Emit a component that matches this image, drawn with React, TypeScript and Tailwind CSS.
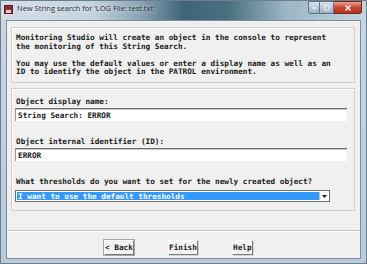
import { Minus, Square, X } from "lucide-react"

const MONO = "font-['DejaVu_Sans_Mono',monospace] font-bold text-[7.7px] leading-[9px] text-[#1a1a1a]"

const INTRO = [
  "Monitoring Studio will create an object in the console to represent",
  "the monitoring of this String Search.",
  "",
  "You may use the default values or enter a display name as well as an",
  "ID to identify the object in the PATROL environment.",
]

function TextField({ value }: { value: string }) {
  return (
    <div className="h-[13px] mr-[7px] bg-white border-t border-l border-t-[#6d6d6d] border-l-[#9a9a9a] shadow-[inset_0_1px_0_#c8c8c8] flex items-center pl-[2px]">
      <span className={MONO}>{value}</span>
    </div>
  )
}

function WinButton({ label, strong }: { label: string; strong?: boolean }) {
  return (
    <button
      className={`h-[15px] bg-[#f4f4f4] border border-t-white border-l-white border-r-[#7a7a7a] border-b-[#7a7a7a] shadow-[1px_1px_0_#d4d4d4] flex items-center justify-center ${MONO} ${
        strong ? "outline outline-1 outline-[#a8a8a8]" : ""
      }`}
    >
      {label}
    </button>
  )
}

export default function App() {
  return (
    <div className="w-[367px] h-[264px] overflow-hidden flex flex-col bg-gradient-to-b from-[#c9d7e3] to-[#b9cad8] border border-[#6c7f8e] font-['Open_Sans',sans-serif]">
      {/* Title bar */}
      <div className="h-[19px] shrink-0 flex items-start bg-[linear-gradient(90deg,#d3dde6_0%,#c7d4de_25%,#8aa4b4_38%,#3f6678_50%,#47707f_62%,#9cb6c6_78%,#c4d5df_100%)]">
        <div className="mt-[4px] ml-[3px] w-[9px] h-[9px] bg-[#8a2f36] border border-[#5b1c22] flex items-end justify-center">
          <div className="w-[5px] h-[3px] bg-[#e8c8c8]" />
        </div>
        <span className="ml-[4px] mt-[2px] text-[7.5px] leading-[11px] text-[#1f2d38] [text-shadow:0_0_4px_#ffffff]">
          New String search for 'LOG File: test.txt'
        </span>
        <div className="ml-auto mr-[4px] flex">
          <div className="w-[12px] h-[13px] rounded-bl-[3px] border border-[#5e7484] bg-gradient-to-b from-[#d7e2ea] to-[#9fb3c2] flex items-center justify-center">
            <Minus className="w-[6px] h-[6px] text-white" strokeWidth={4} />
          </div>
          <div className="w-[14px] h-[13px] border-y border-r border-[#5e7484] bg-gradient-to-b from-[#d7e2ea] to-[#9fb3c2] flex items-center justify-center">
            <Square className="w-[6px] h-[6px] text-white" strokeWidth={3} />
          </div>
          <div className="w-[28px] h-[13px] rounded-br-[3px] border-y border-r border-[#6a2a22] bg-gradient-to-b from-[#e8a08c] via-[#c8452f] to-[#b8321e] flex items-center justify-center">
            <X className="w-[8px] h-[8px] text-white" strokeWidth={4} />
          </div>
        </div>
      </div>

      {/* Client area */}
      <div className="flex-1 mx-[5px] mb-[4px] border border-[#7d8c98] bg-[#f0f0f0] flex flex-col">
        {/* Intro panel */}
        <div className="mt-[6px] ml-[4px] mr-[5px] h-[56px] border border-[#cfcfcf] shadow-[inset_1px_1px_0_#ffffff] pt-[5px] pl-[4px]">
          {INTRO.map((line, i) => (
            <div key={i} className={`${MONO} whitespace-pre h-[8.5px]`}>
              {line}
            </div>
          ))}
        </div>

        {/* Object panel */}
        <div className="mt-[5px] ml-[4px] mr-[5px] h-[123px] border border-[#cfcfcf] shadow-[inset_1px_1px_0_#ffffff] pl-[3px] flex flex-col">
          <div className={`${MONO} mt-[8px] pl-[1px]`}>Object display name:</div>
          <div className="mt-[2px]">
            <TextField value="String Search: ERROR" />
          </div>
          <div className={`${MONO} mt-[16px] pl-[1px]`}>Object internal identifier (ID):</div>
          <div className="mt-[2px]">
            <TextField value="ERROR" />
          </div>
          <div className={`${MONO} mt-[16px] pl-[1px]`}>What thresholds do you want to set for the newly created object?</div>
          <div className="mt-[4px] w-[315px] h-[12px] border border-[#6f6f6f] bg-white flex p-[1px]">
            <div className="flex-1 bg-[#3399ff] flex items-center pl-[1px]">
              <span className={`${MONO} !text-white`}>I want to use the default thresholds</span>
            </div>
            <div className="w-[9px] border-l border-[#c0c0c0] bg-[#f7f7f7] flex items-center justify-center">
              <svg width="5" height="3" viewBox="0 0 5 3">
                <path d="M0 0H5L2.5 3Z" fill="#222" />
              </svg>
            </div>
          </div>
        </div>

        {/* Separator + buttons */}
        <div className="mt-[19px] border-t border-[#c4c4c4] shadow-[0_1px_0_#ffffff]" />
        <div className="mt-[9px] flex gap-[6px] pl-[97px]">
          <div className="w-[58px]">
            <WinButton label="< Back" strong />
          </div>
          <div className="w-[58px]">
            <WinButton label="Finish" />
          </div>
          <div className="w-[30px]">
            <WinButton label="Help" />
          </div>
        </div>
      </div>
    </div>
  )
}
